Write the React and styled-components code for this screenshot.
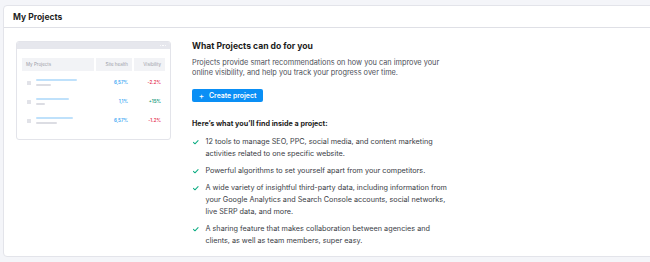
import React from 'react';
import styled, { createGlobalStyle } from 'styled-components';

const Global = createGlobalStyle`
  html, body { margin: 0; padding: 0; background: #f4f5f9; }
  body { font-family: Inter, "Noto Sans", sans-serif; color: #333; }
`;

const Page = styled.div`
  padding: 5px 0 0 3px;
  height: 262px;
  box-sizing: border-box;
  overflow: hidden;
`;

const Card = styled.section`
  width: 680px;
  background: #fff;
  border: 1px solid #e3e4ea;
  border-radius: 4px;
`;

const Header = styled.header`
  height: 21px;
  display: flex;
  align-items: center;
  padding-left: 9px;
  font-weight: 700;
  font-size: 8.5px;
  color: #1f1f24;
  border-bottom: 1px solid #dfe0e6;
`;

const Body = styled.div`
  display: flex;
  align-items: flex-start;
  gap: 21px;
  padding: 13px 0 9px 12px;
`;

const Frame = styled.div`
  width: 155px;
  height: 99px;
  box-sizing: border-box;
  border: 1px solid #e3e4ea;
  border-radius: 3px;
  overflow: hidden;
  flex: none;
`;

const FrameBar = styled.div`
  height: 7px;
  background: #e6e7ed;
  display: flex;
  justify-content: flex-end;
  align-items: center;
  gap: 1px;
  padding-right: 4px;
`;

const Dot = styled.span`
  width: 1.5px;
  height: 1.5px;
  border-radius: 50%;
  background: #fff;
`;

const Table = styled.div`
  padding: 9px 5px 0 5px;
`;

const Grid = styled.div`
  display: grid;
  grid-template-columns: 72px 36px 31px;
  column-gap: 2px;
  align-items: center;
  height: ${p => p.$h}px;
`;

const HeadCell = styled.div`
  background: #f2f3f6;
  height: 13px;
  display: flex;
  align-items: center;
  justify-content: ${p => (p.$right ? 'flex-end' : 'flex-start')};
  padding: 0 4px;
  font-size: 4.5px;
  color: #9a9ca6;
`;

const NameCell = styled.div`
  display: flex;
  align-items: center;
  gap: 5px;
  padding-left: 5px;
`;

const Box = styled.span`
  width: 4px;
  height: 4px;
  background: #e1e2e8;
  border-radius: 0.5px;
`;

const Bars = styled.div`
  display: flex;
  flex-direction: column;
  gap: 3px;
`;

const Bar = styled.span`
  height: 1.6px;
  border-radius: 1px;
  background: ${p => (p.$blue ? '#bfe1fb' : '#dcdde3')};
`;

const Value = styled.div`
  text-align: right;
  padding-right: 4px;
  font-size: 4.5px;
  font-weight: 600;
  color: ${p => p.$c};
`;

const Content = styled.div`
  width: 257px;
  flex: none;
`;

const Title = styled.h2`
  margin: 0 0 7px;
  font-size: 8.6px;
  line-height: 10px;
  font-weight: 700;
  color: #1c1c21;
`;

const Para = styled.p`
  margin: 0;
  font-size: 7.35px;
  line-height: 10px;
  color: #4c4e58;
`;

const Button = styled.button`
  margin-top: 11px;
  height: 13px;
  width: 71px;
  display: flex;
  align-items: center;
  justify-content: center;
  gap: 5px;
  border: 0;
  border-radius: 2px;
  background: #0a8ff5;
  color: #fff;
  font-family: inherit;
  font-size: 6.9px;
  font-weight: 600;
  padding: 0;
`;

const Plus = styled.span`
  font-size: 8px;
  font-weight: 500;
  line-height: 1;
`;

const SubTitle = styled.h3`
  margin: 17px 0 7px;
  font-size: 7.2px;
  line-height: 10px;
  font-weight: 700;
  color: #1c1c21;
`;

const List = styled.ul`
  list-style: none;
  margin: 0;
  padding: 0;
  display: flex;
  flex-direction: column;
  gap: 5px;
`;

const Item = styled.li`
  display: flex;
  gap: 7px;
  font-size: 7.25px;
  line-height: 12px;
  color: #3a3c45;
`;

const Check = styled.svg`
  flex: none;
  margin-top: 4px;
  margin-left: 1px;
`;

const rows = [
  { b: 41, g: 15, sh: '6,57%', v: '-2.2%', vc: '#e5314f' },
  { b: 33, g: 9, sh: '1,1%', v: '+15%', vc: '#0b9577' },
  { b: 37, g: 21, sh: '6,57%', v: '-1.2%', vc: '#e5314f' },
];

const items = [
  '12 tools to manage SEO, PPC, social media, and content marketing activities related to one specific website.',
  'Powerful algorithms to set yourself apart from your competitors.',
  'A wide variety of insightful third-party data, including information from your Google Analytics and Search Console accounts, social networks, live SERP data, and more.',
  'A sharing feature that makes collaboration between agencies and clients, as well as team members, super easy.',
];

function CheckIcon() {
  return (
    <Check width="5.5" height="4.5" viewBox="0 0 5 4">
      <path d="M0.4 2.1 L1.8 3.4 L4.6 0.5" fill="none" stroke="#0fae84" strokeWidth="0.95" strokeLinecap="round" strokeLinejoin="round" />
    </Check>
  );
}

export default function App() {
  return (
    <>
      <Global />
      <Page>
        <Card>
          <Header>My Projects</Header>
          <Body>
            <Frame>
              <FrameBar>
                <Dot />
                <Dot />
                <Dot />
              </FrameBar>
              <Table>
                <Grid $h={13}>
                  <HeadCell>My Projects</HeadCell>
                  <HeadCell $right>Site health</HeadCell>
                  <HeadCell $right>Visibility</HeadCell>
                </Grid>
                <div style={{ height: 2 }} />
                {rows.map((r, i) => (
                  <Grid $h={19} key={i}>
                    <NameCell>
                      <Box />
                      <Bars>
                        <Bar $blue style={{ width: r.b }} />
                        <Bar style={{ width: r.g }} />
                      </Bars>
                    </NameCell>
                    <Value $c="#3aa5f3">{r.sh}</Value>
                    <Value $c={r.vc}>{r.v}</Value>
                  </Grid>
                ))}
              </Table>
            </Frame>
            <Content>
              <Title>What Projects can do for you</Title>
              <Para>
                Projects provide smart recommendations on how you can improve your online visibility, and help you track your progress over time.
              </Para>
              <Button>
                <Plus>+</Plus>
                Create project
              </Button>
              <SubTitle>Here’s what you’ll find inside a project:</SubTitle>
              <List>
                {items.map((t, i) => (
                  <Item key={i}>
                    <CheckIcon />
                    <span>{t}</span>
                  </Item>
                ))}
              </List>
            </Content>
          </Body>
        </Card>
      </Page>
    </>
  );
}
